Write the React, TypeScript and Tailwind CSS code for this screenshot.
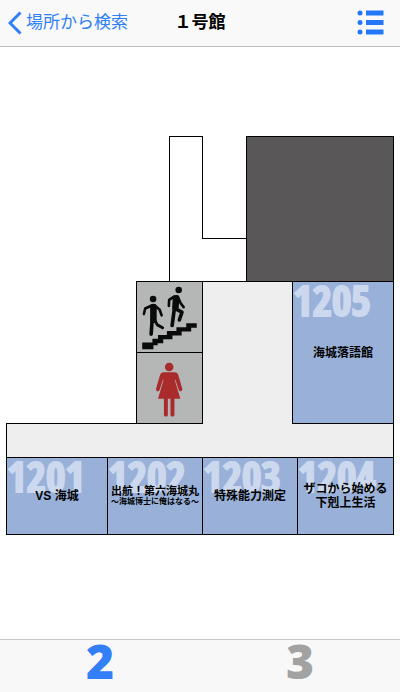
import type { ReactNode } from "react";

function StairsIcon() {
  return (
    <svg viewBox="0 0 198 212" className="h-full w-full" role="img" aria-label="階段">
      <g fill="#0a0a0a">
        <path d="M16 184h31v-12h17v-11h27v-12h29v-12h30v-12h32v14h-17v11h-29v12h-28v12h-28v12H63v6H50v12H16z" />
        <circle cx="49" cy="51" r="10" />
        <circle cx="127" cy="24" r="10" />
      </g>
      <g fill="none" stroke="#0a0a0a" strokeLinecap="round" strokeLinejoin="round">
        <path d="M50 76L50 114" strokeWidth="20" />
        <path d="M45 71L25 80L21 97" strokeWidth="8" />
        <path d="M54 71L69 84L75 101" strokeWidth="8" />
        <path d="M46 116L43 158" strokeWidth="11" />
        <path d="M54 116L62 130L78 139" strokeWidth="9" />
        <path d="M119 49L117 78" strokeWidth="20" />
        <path d="M113 44L98 54L97 72" strokeWidth="8" />
        <path d="M124 44L133 64L142 76" strokeWidth="8" />
        <path d="M113 86L107 132" strokeWidth="11" />
        <path d="M119 82L137 91L129 115" strokeWidth="11" />
      </g>
    </svg>
  );
}

function WomanIcon() {
  return (
    <svg viewBox="0 0 198 212" className="h-full w-full" role="img" aria-label="女子トイレ">
      <g fill="#a92b2b">
        <circle cx="98" cy="42" r="13" />
        <path d="M82 58h32q10 0 12 9l12 41q1 6-4 8q-5 1-7-5l-10-30h-2l17 58h-18v49q0 5-6 5t-6-5v-49h-8v49q0 5-6 5t-6-5v-49H64l17-58h-2l-10 30q-2 6-7 5q-5-2-4-8l12-41q2-9 12-9z" />
      </g>
    </svg>
  );
}

function Room({
  number,
  className,
  children,
}: {
  number: string;
  className: string;
  children: ReactNode;
}) {
  return (
    <button
      type="button"
      className={`relative flex min-w-0 flex-col items-center justify-center border-black bg-[#99b1d9] text-center text-[12px] leading-[14px] font-bold whitespace-nowrap text-black ${className}`}
    >
      <span className="absolute top-0 left-0 font-['Open_Sans_Condensed','Roboto_Condensed',sans-serif] text-[42px] leading-9 font-black text-[#ccd8ed] [-webkit-text-stroke:2px_#ccd8ed]">
        {number}
      </span>
      <span className="relative">{children}</span>
    </button>
  );
}

export default function App() {
  return (
    <div className="flex min-h-screen flex-col bg-white font-['Liberation_Sans','Noto_Sans_CJK_JP',sans-serif] text-black">
      <header className="grid h-[47px] grid-cols-[1fr_auto_1fr] items-center border-b border-[#bdbdbd] bg-[#f9f9f9] px-2">
        <button type="button" className="flex items-center gap-1 justify-self-start text-[17px] leading-6 font-normal whitespace-nowrap text-[#2e7ff8]">
          <svg viewBox="0 0 14 24" className="h-6 w-[14px]" fill="none" stroke="currentColor" strokeWidth="3" aria-hidden="true">
            <path d="M12.500 1.500L2 12L12.500 22.500" />
          </svg>
          場所から検索
        </button>
        <h1 className="text-[17px] leading-6 font-bold">１号館</h1>
        <button type="button" aria-label="一覧" className="mr-2 justify-self-end text-[#2478f8]">
          <svg viewBox="0 0 27 26" className="h-[26px] w-[27px]" fill="currentColor" aria-hidden="true">
            <circle cx="3" cy="3" r="2.500" />
            <circle cx="3" cy="12.500" r="2.500" />
            <circle cx="3" cy="22" r="2.500" />
            <path d="M9 0.500h17.500v5H9zM9 10h17.500v5H9zM9 19.500h17.500v5H9z" />
          </svg>
        </button>
      </header>

      <main className="flex-1 px-[6px] pt-[89px] pb-8">
        <div className="grid h-[145px] grid-cols-[163fr_33fr_44fr_148fr]">
          <div />
          <div className="border-t border-l border-black" />
          <div className="flex flex-col">
            <div className="h-[102px] border-l border-black" />
            <div className="flex-1 border-t border-black" />
          </div>
          <div className="border border-b-0 border-black bg-[#595757]" />
        </div>

        <div className="grid h-[142px] grid-cols-[130fr_66fr_90fr_102fr]">
          <div />
          <div className="grid grid-rows-2">
            <div className="min-h-0 border-t border-l border-black bg-[#b5b6b6]">
              <StairsIcon />
            </div>
            <div className="min-h-0 border-t border-l border-black bg-[#b5b6b6]">
              <WomanIcon />
            </div>
          </div>
          <div className="border-t border-l border-black bg-[#eeeeee]" />
          <Room number="1205" className="border-t border-r border-l">
            海城落語館
          </Room>
        </div>

        <div className="grid h-[34px] grid-cols-[197fr_89fr_102fr] border-r border-l border-black bg-[#eeeeee]">
          <div className="border-t border-black" />
          <div />
          <div className="border-t border-black" />
        </div>

        <div className="grid h-[78px] grid-cols-[101fr_95fr_95fr_97fr] border-t border-b border-black">
          <Room number="1201" className="border-l">
            VS 海城
          </Room>
          <Room number="1202" className="border-l">
            <span className="block text-[11px] leading-3">出航！第六海城丸</span>
            <span className="block text-[8px] leading-[10px]">〜海城博士に俺はなる〜</span>
          </Room>
          <Room number="1203" className="border-l">
            特殊能力測定
          </Room>
          <Room number="1204" className="border-r border-l">
            <span className="block">ザコから始める</span>
            <span className="block">下剋上生活</span>
          </Room>
        </div>
      </main>

      <nav aria-label="階" className="grid h-[53px] grid-cols-2 border-t border-[#c8c8c8] bg-[#f8f8f8] font-['Open_Sans',sans-serif] text-[48px] leading-[42px] font-extrabold">
        <button type="button" aria-current="page" className="flex justify-center text-[#337ff8]">
          2
        </button>
        <button type="button" className="flex justify-center text-[#a2a2a2]">
          3
        </button>
      </nav>
    </div>
  );
}
